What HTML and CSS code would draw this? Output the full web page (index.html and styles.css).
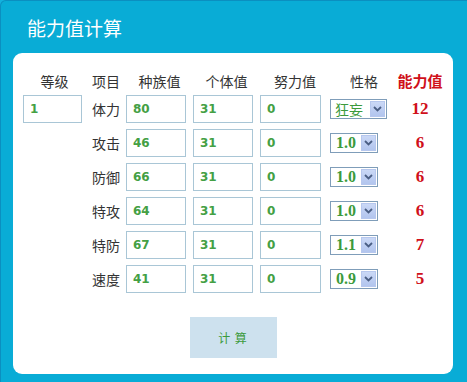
FILE: index.html
```html
<!DOCTYPE html>
<html lang="zh-CN">
<head>
    <meta charset="UTF-8">
    <meta name="viewport" content="width=device-width, initial-scale=1.0">
    <title>能力值计算</title>
    <link rel="stylesheet" href="styles.css">
</head>
<body>
    <div class="frame">
        <h1 class="title">能力值计算</h1>
        <div class="panel">
            <div class="row head">
                <span class="c-level">等级</span>
                <span class="c-label">项目</span>
                <span>种族值</span>
                <span>个体值</span>
                <span>努力值</span>
                <span>性格</span>
                <span class="c-value">能力值</span>
            </div>
            <div class="row">
                <div class="c-level"><div class="box">1</div></div>
                <span class="c-label">体力</span>
                <div><div class="box">80</div></div>
                <div><div class="box">31</div></div>
                <div><div class="box ev">0</div></div>
                <div><div class="pick wide"><span class="pick-text cn">狂妄</span><span class="arrow"><svg width="9" height="6" viewBox="0 0 9 6"><path d="M1 1l3.5 3.5L8 1" fill="none" stroke="#4a5e84" stroke-width="1.8"/></svg></span></div></div>
                <span class="c-value">12</span>
            </div>
            <div class="row">
                <div class="c-level"></div>
                <span class="c-label">攻击</span>
                <div><div class="box">46</div></div>
                <div><div class="box">31</div></div>
                <div><div class="box ev">0</div></div>
                <div><div class="pick"><span class="pick-text">1.0</span><span class="arrow"><svg width="9" height="6" viewBox="0 0 9 6"><path d="M1 1l3.5 3.5L8 1" fill="none" stroke="#4a5e84" stroke-width="1.8"/></svg></span></div></div>
                <span class="c-value">6</span>
            </div>
            <div class="row">
                <div class="c-level"></div>
                <span class="c-label">防御</span>
                <div><div class="box">66</div></div>
                <div><div class="box">31</div></div>
                <div><div class="box ev">0</div></div>
                <div><div class="pick"><span class="pick-text">1.0</span><span class="arrow"><svg width="9" height="6" viewBox="0 0 9 6"><path d="M1 1l3.5 3.5L8 1" fill="none" stroke="#4a5e84" stroke-width="1.8"/></svg></span></div></div>
                <span class="c-value">6</span>
            </div>
            <div class="row">
                <div class="c-level"></div>
                <span class="c-label">特攻</span>
                <div><div class="box">64</div></div>
                <div><div class="box">31</div></div>
                <div><div class="box ev">0</div></div>
                <div><div class="pick"><span class="pick-text">1.0</span><span class="arrow"><svg width="9" height="6" viewBox="0 0 9 6"><path d="M1 1l3.5 3.5L8 1" fill="none" stroke="#4a5e84" stroke-width="1.8"/></svg></span></div></div>
                <span class="c-value">6</span>
            </div>
            <div class="row">
                <div class="c-level"></div>
                <span class="c-label">特防</span>
                <div><div class="box">67</div></div>
                <div><div class="box">31</div></div>
                <div><div class="box ev">0</div></div>
                <div><div class="pick"><span class="pick-text">1.1</span><span class="arrow"><svg width="9" height="6" viewBox="0 0 9 6"><path d="M1 1l3.5 3.5L8 1" fill="none" stroke="#4a5e84" stroke-width="1.8"/></svg></span></div></div>
                <span class="c-value">7</span>
            </div>
            <div class="row">
                <div class="c-level"></div>
                <span class="c-label">速度</span>
                <div><div class="box">41</div></div>
                <div><div class="box">31</div></div>
                <div><div class="box ev">0</div></div>
                <div><div class="pick"><span class="pick-text">0.9</span><span class="arrow"><svg width="9" height="6" viewBox="0 0 9 6"><path d="M1 1l3.5 3.5L8 1" fill="none" stroke="#4a5e84" stroke-width="1.8"/></svg></span></div></div>
                <span class="c-value">5</span>
            </div>
            <div class="actions">
                <button class="calc">计 算</button>
            </div>
        </div>
    </div>
</body>
</html>
```

FILE: styles.css
```css
body {
    margin: 0;
    padding: 0;
    background-color: #13b2dd;
    font-family: "Noto Sans CJK SC", sans-serif;
    color: #333;
}
.frame {
    width: 461px;
    height: 381px;
    background-color: #09acd6;
    border: 1px solid #0b8fc0;
    border-bottom: none;
    border-radius: 6px 6px 0 0;
    padding: 0 0 0 12px;
    box-sizing: content-box;
}
.title {
    margin: 0;
    height: 52px;
    padding-left: 14px;
    font-size: 19px;
    font-weight: normal;
    line-height: 54px;
    color: #fff;
}
.panel {
    width: 440px;
    height: 321px;
    background-color: #fff;
    border-radius: 9px;
    padding-top: 18px;
    box-sizing: border-box;
}
.row {
    display: grid;
    grid-template-columns: 73px 40px 67px 67px 70px 68px 44px;
    align-items: center;
    height: 28px;
    margin-bottom: 6px;
    font-size: 14px;
}
.row.head {
    height: 20px;
    line-height: 20px;
    margin-bottom: 4px;
    white-space: nowrap;
}
.row.head span {
    text-align: center;
}
.row.head .c-label {
    text-align: right;
}
.row.head .c-value {
    font-family: "Noto Sans CJK SC", sans-serif;
    font-size: 15px;
    margin-left: -2px;
    margin-right: -2px;
}
.c-level {
    padding-left: 10px;
}
.c-label {
    text-align: right;
    padding-right: 6px;
}
.box {
    width: 60px;
    height: 28px;
    border: 1px solid #a9c6d6;
    box-sizing: border-box;
    padding-left: 6px;
    font-family: "DejaVu Sans", sans-serif;
    font-weight: bold;
    font-size: 12px;
    line-height: 26px;
    color: #44a044;
}
.c-level .box {
    width: 59px;
}
.box.ev {
    width: 61px;
}
.pick {
    width: 48px;
    height: 20px;
    border: 1px solid #7f9db9;
    box-sizing: border-box;
    display: flex;
    align-items: center;
    justify-content: space-between;
    padding: 0 1px 0 5px;
}
.pick.wide {
    width: 57px;
}
.pick-text {
    font-family: "Liberation Serif", serif;
    font-weight: bold;
    font-size: 16px;
    color: #3c9a3c;
    line-height: 18px;
}
.pick-text.cn {
    font-family: "Noto Sans CJK SC", sans-serif;
    font-weight: normal;
    font-size: 14px;
    margin-left: -1px;
}
.arrow {
    width: 15px;
    height: 16px;
    box-sizing: border-box;
    background: linear-gradient(#cad8f6, #b2c5ee);
    border: 1px solid #b6c7ee;
    display: flex;
    align-items: center;
    justify-content: center;
}
.c-value {
    text-align: center;
    font-family: "Liberation Serif", serif;
    font-weight: bold;
    font-size: 17px;
    color: #d0101a;
}
.actions {
    display: flex;
    justify-content: center;
    padding-top: 18px;
}
.calc {
    width: 87px;
    height: 41px;
    border: none;
    background-color: #cde1ee;
    color: #3c9a3c;
    font-family: "Noto Sans CJK SC", sans-serif;
    font-size: 12px;
    letter-spacing: 1px;
    padding: 0;
}
```
